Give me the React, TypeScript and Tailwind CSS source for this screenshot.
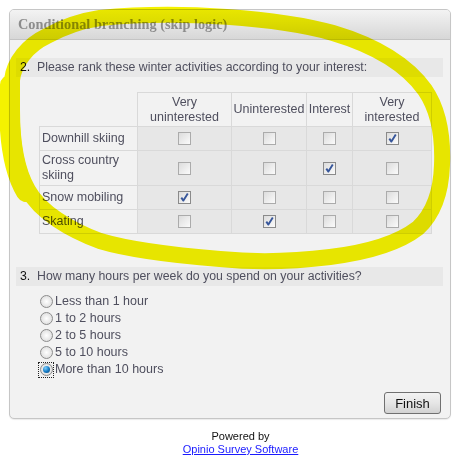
import React from "react";

function Check({ checked }: { checked?: boolean }) {
  return (
    <span
      className={`relative inline-block w-[13px] h-[13px] border ${
        checked ? "border-[#8a8a8a]" : "border-[#ababab]"
      } bg-linear-to-br from-[#dcdcdc] to-[#fbfbfb]`}
    >
      {checked && (
        <svg className="absolute left-0 top-0" width="11" height="11" viewBox="0 0 11 11">
          <path d="M2.3 5.6 L4.4 8.6 L8.8 1.6" fill="none" stroke="#37569a" strokeWidth="1.9" strokeLinejoin="round" />
        </svg>
      )}
    </span>
  );
}

function Radio({ checked }: { checked?: boolean }) {
  return (
    <span
      className={`relative inline-flex items-center justify-center w-[16px] h-[16px] ${
        checked ? "outline outline-1 outline-dotted outline-[#222] -outline-offset-1" : ""
      }`}
    >
      <span className="relative inline-flex items-center justify-center w-[13px] h-[13px] rounded-full border border-[#8c8c8c] bg-radial from-[#ffffff] to-[#d6d6d6]">
        {checked && (
          <span className="w-[7px] h-[7px] rounded-full bg-radial-[at_35%_30%] from-[#7fd0ff] via-[#1a80c8] to-[#0b3f73]" />
        )}
      </span>
    </span>
  );
}

const rows: [string, number, string][] = [
  ["Downhill skiing", 3, "h-[24px]"],
  ["Cross country skiing", 2, "h-[35px]"],
  ["Snow mobiling", 0, "h-[24px]"],
  ["Skating", 1, "h-[24px]"],
];

const headers = ["Very uninterested", "Uninterested", "Interest", "Very interested"];

const hours = ["Less than 1 hour", "1 to 2 hours", "2 to 5 hours", "5 to 10 hours", "More than 10 hours"];

export default function App() {
  return (
    <div className="relative w-[463px] h-[466px] bg-white overflow-hidden font-['Liberation_Sans',Arial,sans-serif] text-[12.5px] text-[#4f4f5e]">
      <div className="pt-[9px] pl-[9px]">
        <div className="w-[442px] border border-[#c6c6c6] rounded-[5px] bg-[#f2f2f2] overflow-hidden shadow-[0_1px_1px_rgba(0,0,0,0.08)]">
          <div className="h-[30px] flex items-center pl-[8px] border-b border-[#c4c4c4] bg-linear-to-b from-[#f3f3f3] to-[#d7d7d7]">
            <span className="font-['Liberation_Serif','Times_New_Roman',serif] font-bold text-[14.3px] text-[#8c8c8c]">
              Conditional branching (skip logic)
            </span>
          </div>
          <div className="pt-[18px] pb-[4px]">
            <div className="ml-[6px] mr-[7px] h-[19px] flex items-center pl-[4px] bg-[#e8e8e8] text-[12.3px]">
              <span className="w-[17px] text-[#111]">2.</span>
              <span>Please rank these winter activities according to your interest:</span>
            </div>
            <div className="mt-[15px] ml-[29px] grid grid-cols-[99px_94px_75px_46px_79px] leading-[15px]">
              <div className="h-[35px] border-r border-b border-[#d9d9d9]" />
              {headers.map((h, i) => (
                <div
                  key={i}
                  className="h-[35px] flex items-center justify-center text-center border-t border-r border-b border-[#d9d9d9]"
                >
                  {h}
                </div>
              ))}
              {rows.map(([label, sel, hc], r) => (
                <React.Fragment key={r}>
                  <div className={`${hc} flex items-center pl-[2px] pr-[2px] border-l border-r border-b border-[#d9d9d9]`}>
                    {label}
                  </div>
                  {[0, 1, 2, 3].map((c) => (
                    <div
                      key={c}
                      className={`${hc} flex items-center justify-center bg-[#e7e7e7] border-r border-b border-[#d9d9d9]`}
                    >
                      <Check checked={c === sel} />
                    </div>
                  ))}
                </React.Fragment>
              ))}
            </div>
            <div className="mt-[33px] ml-[6px] mr-[7px] h-[19px] flex items-center pl-[4px] bg-[#e8e8e8] text-[12.3px]">
              <span className="w-[17px] text-[#111]">3.</span>
              <span>How many hours per week do you spend on your activities?</span>
            </div>
            <div className="mt-[7px] ml-[28px] flex flex-col">
              {hours.map((h, i) => (
                <div key={i} className="h-[17px] flex items-center gap-[1px]">
                  <Radio checked={i === 4} />
                  <span>{h}</span>
                </div>
              ))}
            </div>
            <div className="mt-[14px] flex justify-end pr-[9px]">
              <button className="w-[57px] h-[22px] rounded-[3px] border border-[#707070] bg-linear-to-b from-[#f2f2f2] via-[#e6e6e6] to-[#d2d2d2] text-[13px] text-[#111] leading-none">
                Finish
              </button>
            </div>
          </div>
        </div>
      </div>
      <div className="mt-[11px] pl-[18px] text-center text-[11px] leading-[13px] text-[#111]">
        <div>Powered by</div>
        <a href="#" className="text-[#1a1aff] underline">
          Opinio Survey Software
        </a>
      </div>
      <svg
        className="absolute left-0 top-0 pointer-events-none mix-blend-multiply"
        width="463"
        height="466"
        viewBox="0 0 463 466"
      >
        <path
          d="M 12 80 C 14 62, 28 45, 47 36 C 65 26, 80 21, 100 18 C 180 10, 280 18, 333 33 C 370 44, 405 62, 425 90 C 440 112, 443 140, 442 165 C 441 195, 432 215, 418 228 C 400 242, 370 252, 330 257 C 290 262, 250 262, 220 259 C 170 255, 130 250, 100 241 C 70 230, 40 212, 28 190 C 15 168, 12 140, 12 110 Z"
          fill="none"
          stroke="#f4f200"
          strokeWidth="16"
          strokeLinejoin="round"
        />
        <path
          d="M 10 85 C 8 120, 10 165, 26 192"
          fill="none"
          stroke="#f4f200"
          strokeWidth="20"
          strokeLinecap="round"
        />
      </svg>
    </div>
  );
}
